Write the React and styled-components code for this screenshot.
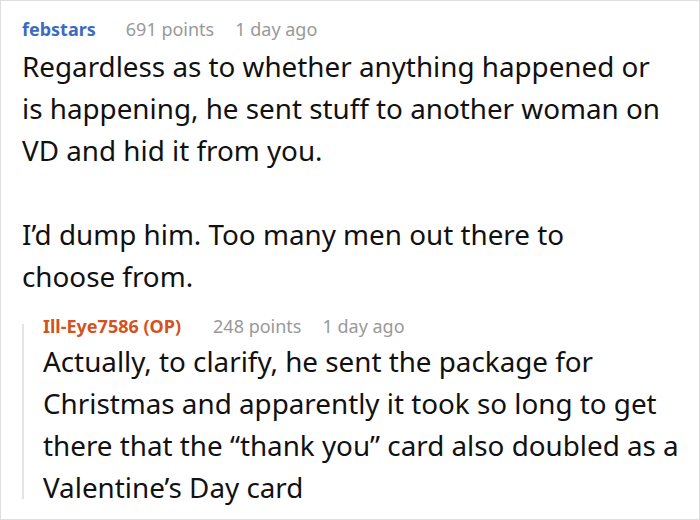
import styled, { createGlobalStyle } from "styled-components";

const GlobalStyle = createGlobalStyle`
  html, body {
    margin: 0;
    padding: 0;
    background: #fff;
  }
  * {
    box-sizing: border-box;
  }
`;

const Card = styled.div`
  width: 700px;
  height: 520px;
  border: 1px solid #dedede;
  background: #fff;
  padding: 16px 8px 0 21px;
  font-family: "Noto Sans", "Open Sans", sans-serif;
  color: #111;
  overflow: hidden;
`;

const Meta = styled.div`
  display: flex;
  align-items: baseline;
  font-size: 18px;
  line-height: 24px;
  white-space: nowrap;
`;

const Author = styled.span`
  font-weight: 700;
  color: ${(p) => (p.$op ? "#d4521d" : "#3c6bbd")};
  margin-right: ${(p) => (p.$op ? "32px" : "30px")};
`;

const Points = styled.span`
  color: #999;
  margin-right: 21px;
`;

const When = styled.span`
  color: #999;
`;

const Body = styled.div`
  font-size: 27.8px;
  line-height: 42px;
  margin-top: ${(p) => p.$top || "4px"};
  white-space: nowrap;
`;

const Reply = styled.div`
  display: flex;
  margin-top: 17px;
`;

const Rail = styled.div`
  width: 2px;
  flex: none;
  margin: 10px 19px 9px 0;
  background: #e4e4e4;
`;

const ReplyContent = styled.div`
  flex: 1;
`;

const App = () => {
  return (
    <>
      <GlobalStyle />
      <Card>
        <Meta>
          <Author>febstars</Author>
          <Points>691 points</Points>
          <When>1 day ago</When>
        </Meta>
        <Body>
          Regardless as to whether anything happened or
          <br />
          is happening, he sent stuff to another woman on
          <br />
          VD and hid it from you.
          <br />
          <br />
          I’d dump him. Too many men out there to
          <br />
          choose from.
        </Body>
        <Reply>
          <Rail />
          <ReplyContent>
            <Meta>
              <Author $op>Ill-Eye7586 (OP)</Author>
              <Points>248 points</Points>
              <When>1 day ago</When>
            </Meta>
            <Body $top="2px">
              Actually, to clarify, he sent the package for
              <br />
              Christmas and apparently it took so long to get
              <br />
              there that the “thank you” card also doubled as a
              <br />
              Valentine’s Day card
            </Body>
          </ReplyContent>
        </Reply>
      </Card>
    </>
  );
};

export default App;
